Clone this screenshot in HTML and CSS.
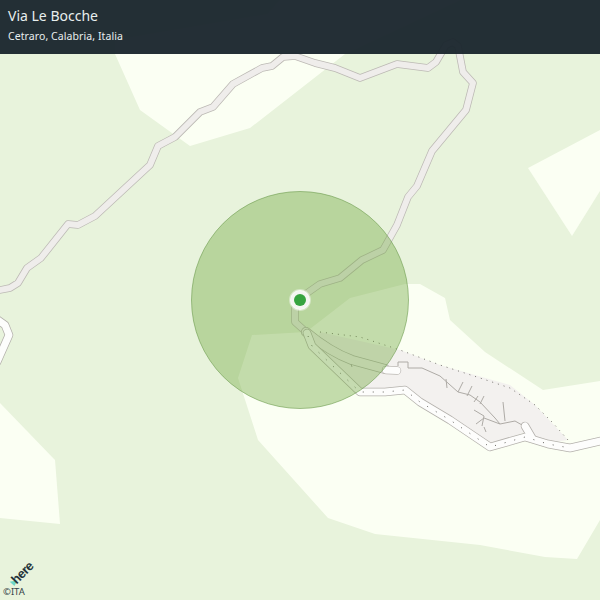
FILE: index.html
```html
<!DOCTYPE html>
<html lang="it">
<head>
<meta charset="utf-8">
<title>Via Le Bocche</title>
<link rel="stylesheet" href="styles.css">
</head>
<body>
<main class="map">
  <svg class="canvas" width="600" height="600" viewBox="0 0 600 600">
    <defs>
      <path id="r1" d="M-5 291 L10 288 L18 283 L27 268 L41 258 L68 224 L78 225 L95 216 L150 165 L158 146 L175 137 L200 112 L213 107 L233 84 L262 68 L272 66 L283 57 L295 56 L315 63 L335 68 L360 78 L397 64 L428 68 L436 62 L446 45 L453 42 L458 46 L463 72 L473 83 L466 110 L432 151 L417 186 L408 197 L397 225 L383 250 L362 260 L340 278 L320 284 L300 298"/>
      <path id="r2a" d="M300 300 L295 308 L295 322 L305 331"/>
      <path id="r3" d="M306 332 Q330 352 352 360 L385 369"/>
    </defs>
    <polygon class="land" points="115,54 140,110 190,146 250,128 345,54 460,0 280,0 268,14 115,40"/>
    <polygon class="land" points="528,168 600,130 600,191 572,236"/>
    <polygon class="land" points="252,335 306,332 350,298 405,284 420,284 445,298 450,320 485,352 543,390 600,381 600,520 577,559 545,557 480,545 375,534 328,518 258,440 238,378"/>
    <polygon class="land" points="0,403 55,460 60,524 0,518"/>
    <polygon class="town" points="320,332 400,350 440,365 510,385 535,405 568,440 548,443 525,432 490,445 450,418 420,398 405,388 380,389 362,388 316,345"/>
    <polyline class="boundary" points="320,332 360,337 400,350 440,365 480,378 510,388 535,405 553,423 568,440"/>
    <g class="casing"><use href="#r1"/><use href="#r2a"/></g>
    <g class="fill"><use href="#r1"/><use href="#r2a"/></g>
    <use class="wide-casing" href="#r3"/>
    <use class="wide-fill" href="#r3"/>
    <polyline class="main-casing" points="307,333 312,346 360,392 385,392 405,390 420,402 450,420 490,447 525,437 548,444 570,448 605,440"/>
    <polyline class="main-casing" points="525,426 532,438"/>
    <polyline class="main-casing" points="-5,318 5,325 9,335 -3,362"/>
    <polyline class="end-casing" points="386,370 397,370.5"/>
    <polyline class="main-fill" points="307,333 312,346 360,392 385,392 405,390 420,402 450,420 490,447 525,437 548,444 570,448 605,440"/>
    <polyline class="main-fill" points="525,426 532,438"/>
    <polyline class="main-fill" points="-5,318 5,325 9,335 -3,362"/>
    <polyline class="white-end" points="386,370 397,370.5"/>
    <polyline class="dots" points="308,336 312,346 360,392 385,392 405,390 420,402 450,420 490,447 525,437 548,444 570,448"/>
    <path class="street" d="M351 364 L352 367 M398 366 L398 362 L408 362 L408 368 L422 368 L440 376 L458 392 L470 395 L480 402 L495 418 L500 424 L515 421 L522 425 M446 379 L447 388 M463 382 L458 392 M472 386 L467 396 M478 396 L474 402 M484 396 L480 404 M503 402 L505 421 M474 410 L484 416 L482 426 M500 424 L484 418 L476 424 M484 427 L486 432"/>
    <circle class="radius" cx="300" cy="300" r="108.5"/>
    <circle class="halo" cx="300" cy="300" r="10"/>
    <circle class="pin" cx="300" cy="300" r="6"/>
  </svg>
  <header class="bar">
    <h1 class="title">Via Le Bocche</h1>
    <p class="subtitle">Cetraro, Calabria, Italia</p>
  </header>
  <div class="logo"><span class="logo-mark"></span><span class="logo-word">here</span></div>
  <div class="credit">©ITA</div>
</main>
</body>
</html>
```

FILE: styles.css
```css
html, body {
  margin: 0;
  padding: 0;
}
.map {
  position: relative;
  width: 600px;
  height: 600px;
  overflow: hidden;
  background: #e8f3dc;
  font-family: "Noto Sans", sans-serif;
}
.canvas {
  display: block;
}
.land {
  fill: #fbfff3;
}
.town {
  fill: #f3f1ef;
}
.boundary {
  fill: none;
  stroke: #77756f;
  stroke-width: 1;
  stroke-dasharray: 1 5;
}
.casing, .main-casing, .wide-casing, .end-casing {
  fill: none;
  stroke: #bcb9b4;
  stroke-width: 7.5;
  stroke-linejoin: round;
  stroke-linecap: round;
}
.main-casing {
  stroke-width: 8.5;
  stroke: #b3b0ab;
}
.wide-casing {
  stroke-width: 10;
  stroke: #b3b0ab;
}
.end-casing {
  stroke-width: 8.5;
}
.fill, .wide-fill {
  fill: none;
  stroke: #efedeb;
  stroke-width: 6;
  stroke-linejoin: round;
  stroke-linecap: round;
}
.wide-fill {
  stroke-width: 8.5;
  stroke: #f3f1ef;
}
.main-fill, .white-end {
  fill: none;
  stroke: #fdfdfc;
  stroke-width: 7;
  stroke-linejoin: round;
  stroke-linecap: round;
}
.dots {
  fill: none;
  stroke: #66645f;
  stroke-width: 1;
  stroke-dasharray: 1 9;
}
.street {
  fill: none;
  stroke: #aeaba6;
  stroke-width: 1;
}
.radius {
  fill: rgba(112, 168, 62, 0.4);
  stroke: rgba(100, 150, 70, 0.55);
  stroke-width: 1;
}
.halo {
  fill: #f4f6f1;
  stroke: rgba(255, 255, 255, 0.4);
  stroke-width: 2;
  filter: blur(0.6px);
}
.pin {
  fill: #36a43f;
}
.bar {
  position: absolute;
  top: 0;
  left: 0;
  right: 0;
  height: 54px;
  box-sizing: border-box;
  padding: 7px 8px 0;
  background: rgba(27, 38, 46, 0.96);
  color: #e8eeee;
}
.title {
  margin: 0;
  font-size: 14px;
  line-height: 17px;
  font-weight: 400;
}
.subtitle {
  margin: 5px 0 0;
  font-size: 10.5px;
  line-height: 14px;
  letter-spacing: 0.08px;
}
.logo {
  position: absolute;
  left: 7px;
  top: 559px;
  width: 30px;
  height: 28px;
}
.logo-mark {
  position: absolute;
  left: 3px;
  bottom: 1px;
  width: 0;
  height: 0;
  border-left: 4px solid transparent;
  border-right: 4px solid transparent;
  border-top: 5px solid #6fd6c8;
  transform: rotate(-10deg);
}
.logo-word {
  position: absolute;
  left: 3px;
  top: 7px;
  font-family: "Liberation Sans", sans-serif;
  font-size: 13px;
  line-height: 14px;
  font-weight: 700;
  letter-spacing: -0.6px;
  color: #24343a;
  transform: rotate(-45deg);
}
.credit {
  position: absolute;
  left: 3px;
  top: 586px;
  font-size: 9.5px;
  line-height: 12px;
  color: #35444a;
}
```
